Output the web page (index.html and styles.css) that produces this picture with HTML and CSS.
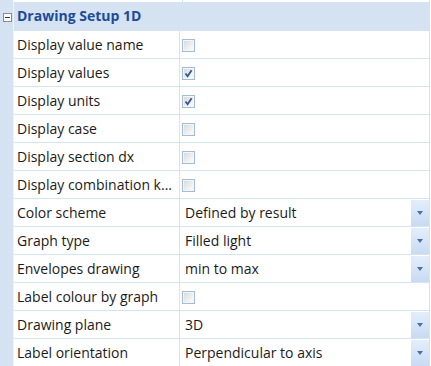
FILE: index.html
```html
<!DOCTYPE html>
<html lang="en">

<head>
  <meta charset="UTF-8">
  <title>Drawing Setup 1D</title>
  <link rel="stylesheet" href="styles.css">
</head>

<body>
  <div class="grid">
    <div class="gutter">
      <div class="gutter-top"></div>
      <div class="collapse"><span></span></div>
    </div>

    <div class="props">
      <div class="prev-row">
        <div class="name"></div>
        <div class="value"></div>
      </div>

      <div class="category">Drawing Setup 1D</div>

      <div class="row">
        <div class="name">Display value name</div>
        <div class="value"><span class="check"></span></div>
      </div>
      <div class="row">
        <div class="name">Display values</div>
        <div class="value"><span class="check checked"><svg viewBox="0 0 13 13"><path d="M3.5 6.5 L5.6 9.2 L9.6 3.2" /></svg></span></div>
      </div>
      <div class="row">
        <div class="name">Display units</div>
        <div class="value"><span class="check checked"><svg viewBox="0 0 13 13"><path d="M3.5 6.5 L5.6 9.2 L9.6 3.2" /></svg></span></div>
      </div>
      <div class="row">
        <div class="name">Display case</div>
        <div class="value"><span class="check"></span></div>
      </div>
      <div class="row">
        <div class="name">Display section dx</div>
        <div class="value"><span class="check"></span></div>
      </div>
      <div class="row">
        <div class="name">Display combination k...</div>
        <div class="value"><span class="check"></span></div>
      </div>
      <div class="row">
        <div class="name">Color scheme</div>
        <div class="value"><span class="text">Defined by result</span><span class="drop"><i></i></span></div>
      </div>
      <div class="row">
        <div class="name">Graph type</div>
        <div class="value"><span class="text">Filled light</span><span class="drop"><i></i></span></div>
      </div>
      <div class="row">
        <div class="name">Envelopes drawing</div>
        <div class="value"><span class="text">min to max</span><span class="drop"><i></i></span></div>
      </div>
      <div class="row">
        <div class="name">Label colour by graph</div>
        <div class="value"><span class="check"></span></div>
      </div>
      <div class="row">
        <div class="name">Drawing plane</div>
        <div class="value"><span class="text">3D</span><span class="drop"><i></i></span></div>
      </div>
      <div class="row">
        <div class="name">Label orientation</div>
        <div class="value"><span class="text">Perpendicular to axis</span><span class="drop"><i></i></span></div>
      </div>
    </div>
  </div>
</body>

</html>
```

FILE: styles.css
```css
body {
  margin: 0;
  background: #fff;
  font-family: "Open Sans", sans-serif;
  font-size: 14px;
  color: #1b1b1b;
  overflow: hidden;
}

.grid {
  display: flex;
  width: 430px;
}

/* left gutter with collapse box */
.gutter {
  width: 13px;
  flex-shrink: 0;
  background: #d4e2f1;
  border-right: 1px solid #eef4fa;
}

.gutter-top {
  height: 11px;
}

.collapse {
  width: 7px;
  height: 7px;
  margin-left: 3px;
  margin-top: 2px;
  border: 1px solid #8e8e8e;
  background: #fdfdfd;
  display: flex;
  align-items: center;
  justify-content: center;
}

.collapse span {
  width: 5px;
  height: 1px;
  background: #3a3a3a;
}

.props {
  flex: 1;
  border-right: 1px solid #d4e2f1;
}

.prev-row {
  display: flex;
  height: 2px;
}

.prev-row .name {
  width: 165px;
  border-right: 1px solid #d4e2f1;
}

.category {
  height: 28px;
  background: #d4e2f1;
  color: #1d4b99;
  font-weight: 700;
  padding-left: 3px;
  line-height: 28px;
}

.row {
  display: flex;
  height: 28px;
  box-sizing: border-box;
  border-top: 1px solid #d4e2f1;
}

.name {
  width: 162px;
  padding-left: 3px;
  border-right: 1px solid #d4e2f1;
  line-height: 27px;
  white-space: nowrap;
  overflow: hidden;
}

.value {
  flex: 1;
  display: flex;
  align-items: center;
  padding-left: 2px;
}

.value .text {
  flex: 1;
  padding-left: 3px;
}

.check {
  width: 11px;
  height: 11px;
  border: 1px solid #a2bcdf;
  background: linear-gradient(135deg, #d6d6d6 0%, #f4f4f4 70%, #ffffff 100%);
  box-shadow: inset 0 0 0 1px #f6f6f6;
  margin-top: 1px;
  position: relative;
}

.check svg {
  position: absolute;
  left: -1px;
  top: -1px;
  width: 13px;
  height: 13px;
}

.check svg path {
  fill: none;
  stroke: #2f5596;
  stroke-width: 1.8;
}

.drop {
  width: 18px;
  align-self: stretch;
  margin-top: 1px;
  background: linear-gradient(180deg, #e4eefa 0%, #c8dbf3 100%);
  display: flex;
  align-items: center;
  justify-content: center;
}

.drop i {
  width: 0;
  height: 0;
  border-left: 3.5px solid transparent;
  border-right: 3.5px solid transparent;
  border-top: 4px solid #4d6fa6;
}
```
